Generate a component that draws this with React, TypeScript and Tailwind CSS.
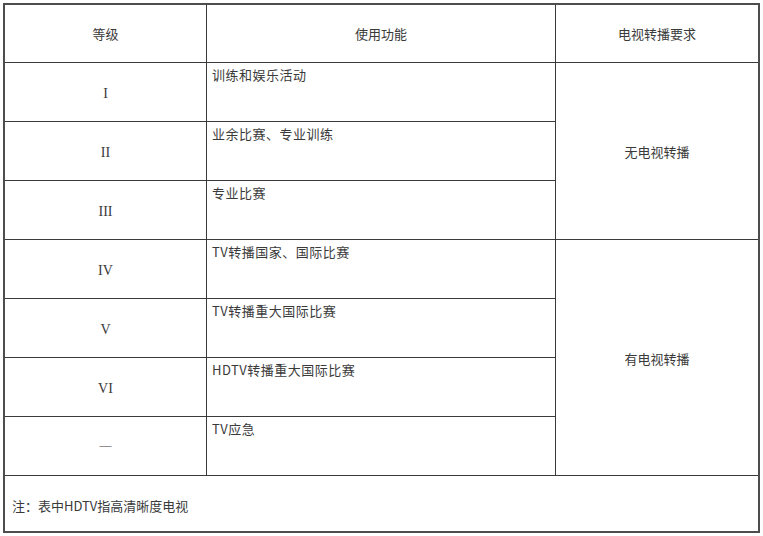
const rows = [
  { level: "I", use: "训练和娱乐活动" },
  { level: "II", use: "业余比赛、专业训练" },
  { level: "III", use: "专业比赛" },
  { level: "IV", use: "TV转播国家、国际比赛" },
  { level: "V", use: "TV转播重大国际比赛" },
  { level: "VI", use: "HDTV转播重大国际比赛" },
  { level: "—", use: "TV应急" },
];

const cjk = "font-['Noto_Sans_CJK_SC',sans-serif]";

export default function App() {
  return (
    <div className="h-[536px] w-[763px] bg-white pl-[3px] pt-[3px]">
      <div
        className={`grid w-[757px] grid-cols-[202px_349px_1fr] grid-rows-[58px_repeat(7,59px)_55px] border-2 border-[#4d4d4d] text-[13px] leading-[18px] text-[#3a3a3a] ${cjk}`}
      >
        {/* Header */}
        <div className="flex items-center justify-center border-b border-r border-[#3a3a3a]">等级</div>
        <div className="flex items-center justify-center border-b border-r border-[#3a3a3a]">使用功能</div>
        <div className="flex items-center justify-center border-b border-[#3a3a3a]">电视转播要求</div>

        {rows.map((r, i) => (
          <div key={r.level} className="contents">
            <div
              className={`flex items-center justify-center border-b border-r border-[#3a3a3a] font-['Liberation_Serif',serif] ${
                r.level === "—" ? "pb-[2px] text-[12px]" : "pt-[3px] text-[14px]"
              }`}
              style={{ gridRow: i + 2, gridColumn: 1 }}
            >
              {r.level}
            </div>
            <div
              className="border-b border-r border-[#3a3a3a] pl-[5px] pt-[3px] tracking-[0.5px]"
              style={{ gridRow: i + 2, gridColumn: 2 }}
            >
              {r.use}
            </div>
          </div>
        ))}

        {/* Merged TV column */}
        <div className="col-start-3 row-span-3 row-start-2 flex items-center justify-center border-b border-[#3a3a3a] pt-[2px]">
          无电视转播
        </div>
        <div className="col-start-3 row-span-4 row-start-5 flex items-center justify-center border-b border-[#3a3a3a] pt-[3px]">
          有电视转播
        </div>

        {/* Footer note */}
        <div className="col-span-3 row-start-9 flex items-center pl-[7px] pt-[4px]">注：表中HDTV指高清晰度电视</div>
      </div>
    </div>
  );
}
